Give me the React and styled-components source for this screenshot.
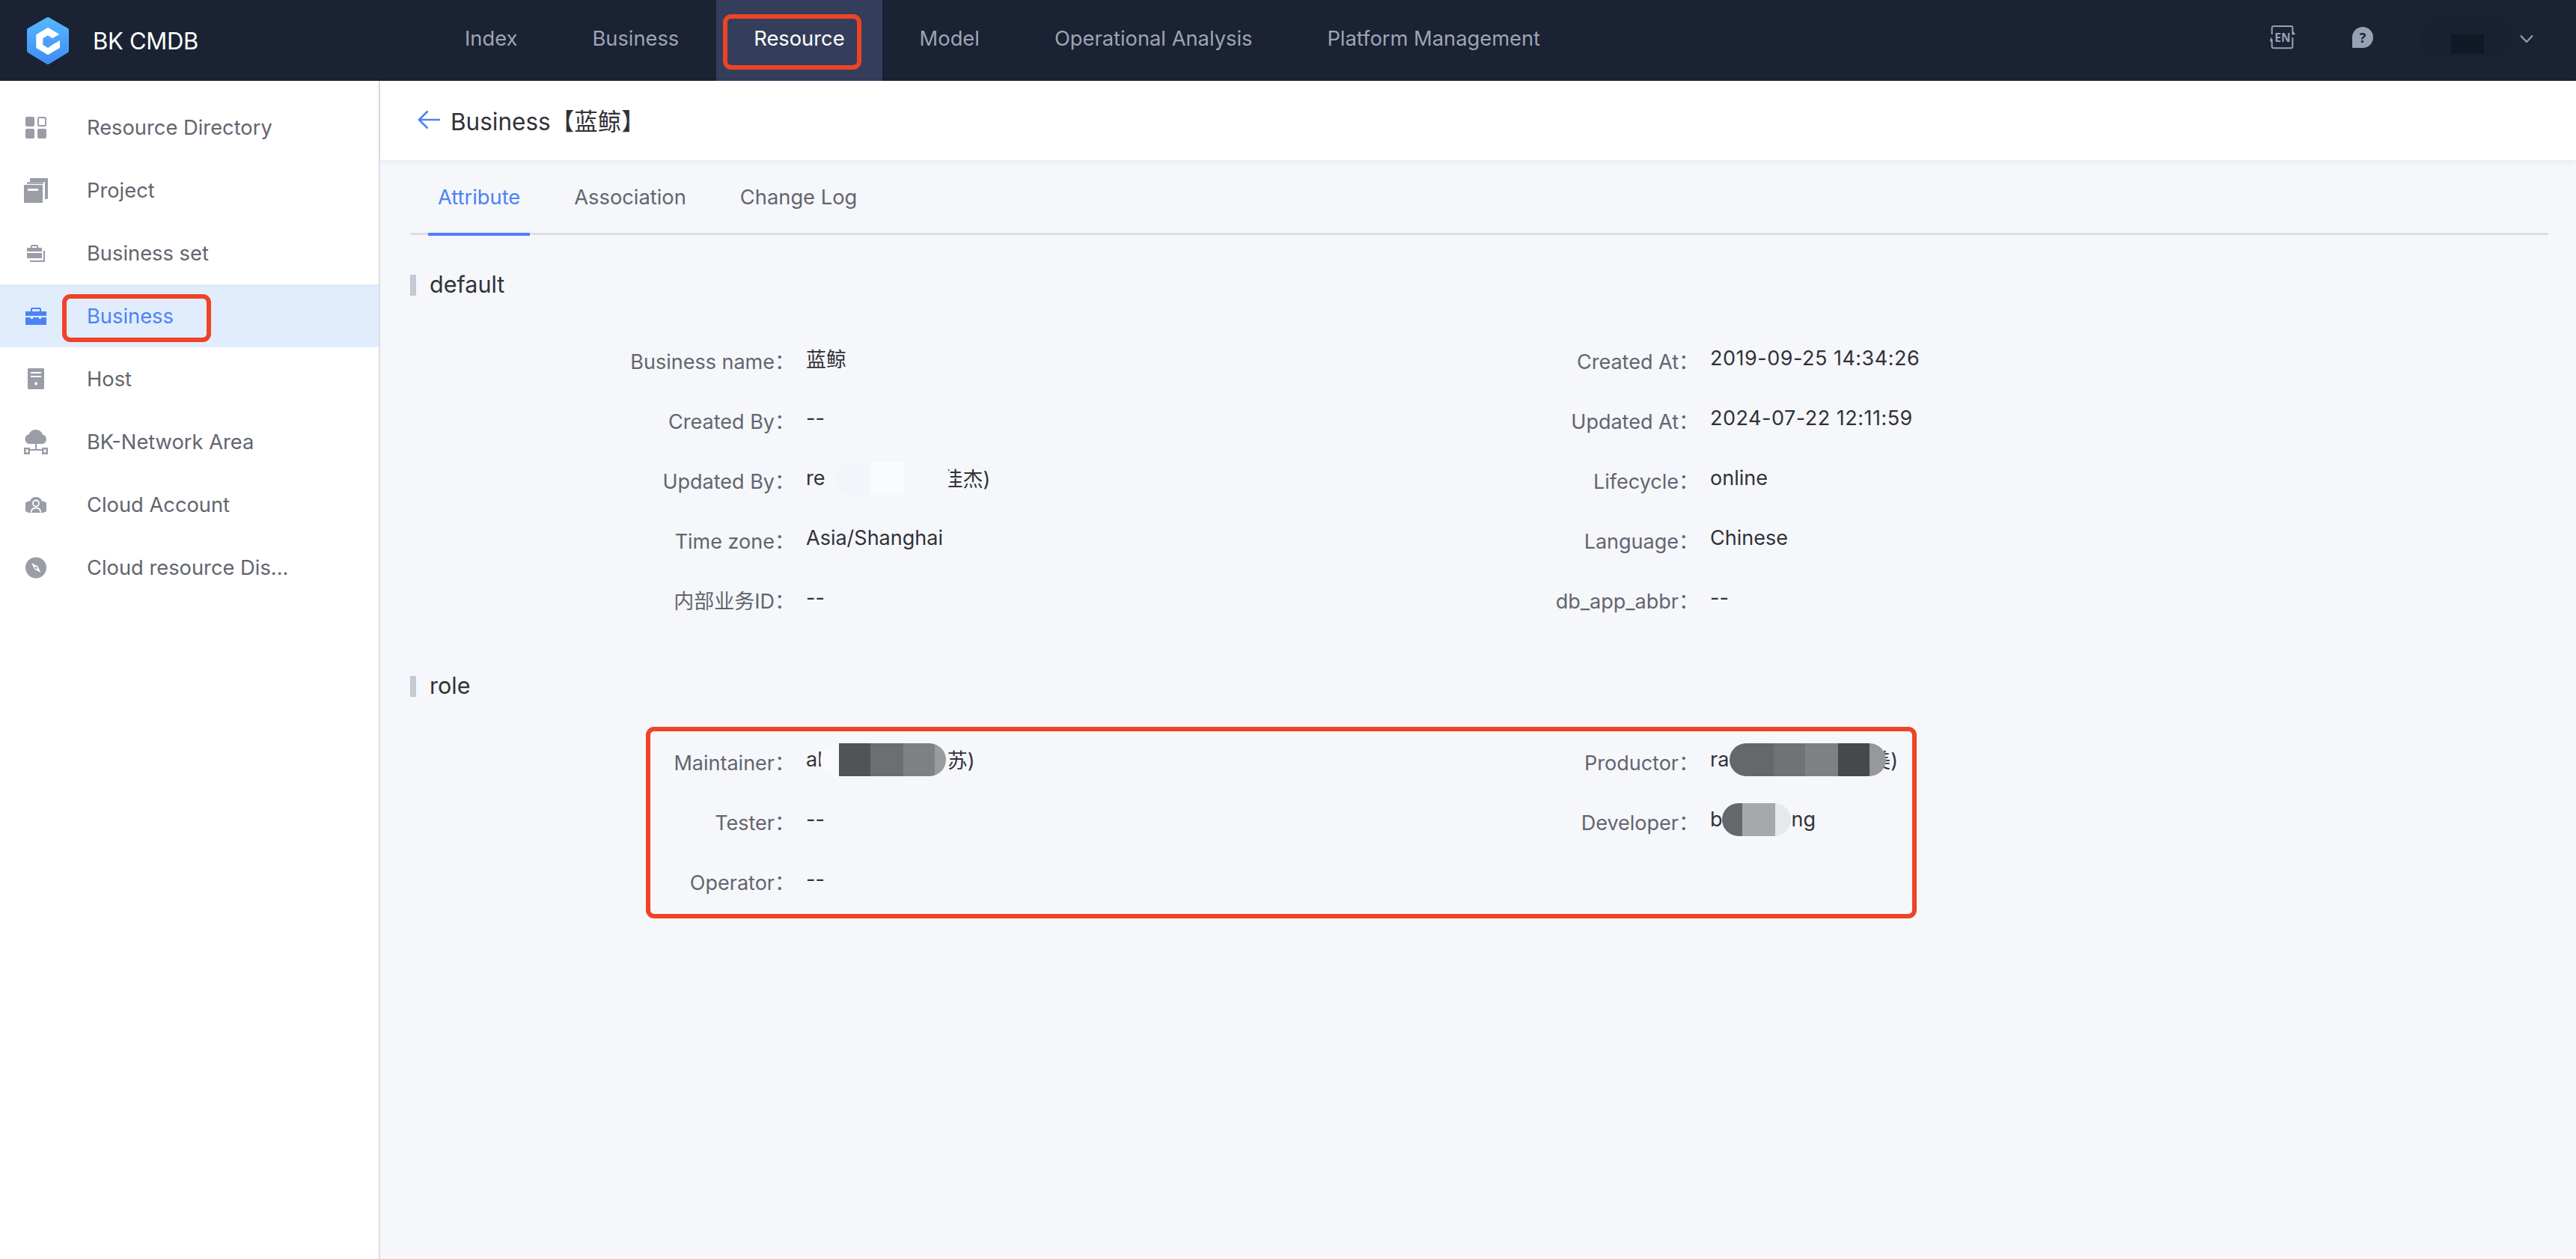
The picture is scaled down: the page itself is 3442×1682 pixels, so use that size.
import styled, { createGlobalStyle } from "styled-components";

const GlobalStyle = createGlobalStyle`
  * { box-sizing: border-box; }
  html, body { margin: 0; padding: 0; background: #f5f7fb; }
  body {
    font-family: Inter, "Noto Sans CJK SC", "Noto Sans", sans-serif;
    font-size: 27.3px;
    color: #313238;
  }
`;

const Page = styled.div`
  position: relative;
  width: 3442px;
  height: 1682px;
  overflow: hidden;
  display: flex;
  flex-direction: column;
`;

/* top bar */
const TopBar = styled.header`
  height: 108px;
  flex: none;
  display: flex;
  align-items: center;
  background: #1a2233;
`;
const Brand = styled.div`
  width: 571px;
  padding-left: 36px;
  display: flex;
  align-items: center;
  gap: 32px;
`;
const BrandName = styled.span`
  color: #fff;
  font-size: 31px;
  letter-spacing: -0.3px;
`;
const Nav = styled.nav`
  display: flex;
  height: 100%;
`;
const NavItem = styled.a`
  display: flex;
  align-items: center;
  padding: 0 50px 5px;
  color: ${(p) => (p.$active ? "#fff" : "#9ea4b3")};
  background: ${(p) => (p.$active ? "#343e5a" : "transparent")};
`;
const TopRight = styled.div`
  margin-left: auto;
  padding: 0 57px 8px 0;
  display: flex;
  align-items: center;
`;
const UserBlot = styled.div`
  width: 123px;
  height: 54px;
  margin: 0 9px 0 63px;
  border-radius: 26px;
  background: #182031;
  display: flex;
  justify-content: center;
`;
const UserBlotCore = styled.div`
  width: 44px;
  height: 26px;
  margin-top: 23px;
  background: #111826;
`;
const HelpGap = styled.div`
  width: 74px;
`;
const ChevronBox = styled.span`
  display: flex;
  margin-top: 3px;
`;

/* body */
const Body = styled.div`
  flex: 1;
  display: flex;
  min-height: 0;
`;
const Sidebar = styled.aside`
  width: 508px;
  flex: none;
  padding-top: 20px;
  background: #fff;
  border-right: 2px solid #dcdee5;
`;
const MenuItem = styled.a`
  height: 84px;
  display: flex;
  align-items: center;
  padding-left: 32px;
  gap: 52px;
  color: ${(p) => (p.$active ? "#4d82f5" : "#63656e")};
  background: ${(p) => (p.$active ? "#e1ecfd" : "transparent")};
`;
const MenuIcon = styled.span`
  width: 32px;
  height: 40px;
  flex: none;
  display: flex;
  align-items: center;
  justify-content: center;
  color: ${(p) => (p.$active ? "#4d82f5" : "#9a9ca6")};
`;
const MenuLabel = styled.span`
  white-space: nowrap;
`;

const Main = styled.main`
  flex: 1;
  min-width: 0;
  background: #f5f7fb;
`;
const Crumb = styled.div`
  height: 106px;
  padding: 0 0 2px 50px;
  display: flex;
  align-items: center;
  gap: 14px;
  background: #fff;
  box-shadow: 0 2px 8px rgba(30, 40, 70, 0.07);
  font-size: 31.5px;
`;
const Content = styled.div`
  padding: 0 37px 0 40px;
`;
const Tabs = styled.div`
  height: 100px;
  padding-left: 24px;
  display: flex;
  gap: 46px;
  border-bottom: 3px solid #dcdee5;
`;
const Tab = styled.a`
  height: 101px;
  padding: 2px 13px 0;
  display: flex;
  align-items: center;
  color: ${(p) => (p.$active ? "#4d82f5" : "#63656e")};
  border-bottom: 4px solid ${(p) => (p.$active ? "#4d82f5" : "transparent")};
`;
const SectionTitle = styled.h3`
  margin: ${(p) => p.$top}px 0 46px;
  height: 28px;
  padding: 0 0 3px 18px;
  display: flex;
  align-items: center;
  border-left: 8px solid #c4c9d2;
  font-size: 30.5px;
  font-weight: 400;
  color: #313238;
`;
const FieldGrid = styled.div`
  padding-left: 114px;
  display: grid;
  grid-template-columns: 1208px 1208px;
  grid-auto-rows: 80px;
`;
const Field = styled.div`
  display: flex;
  align-items: center;
`;
const Label = styled.span`
  width: 400px;
  flex: none;
  text-align: right;
  font-size: 27px;
  color: #63656e;
  white-space: nowrap;
`;
const Value = styled.div`
  height: 38px;
  margin: 0 0 5px 15px;
  display: flex;
  align-items: center;
  font-size: 27px;
  white-space: nowrap;
`;
const DateValue = styled(Value)`
  letter-spacing: 0.5px;
`;
const Blot = styled.span`
  position: relative;
  z-index: 1;
  flex: none;
  height: 44px;
  margin-left: ${(p) => p.$left || 0}px;
  margin-right: ${(p) => p.$right || 0}px;
  display: flex;
  overflow: hidden;
  border-radius: 22px;
`;
const BlotCell = styled.i`
  display: block;
  width: ${(p) => p.$w}px;
  background: ${(p) => p.$c};
`;

/* red annotation frames, they sit on top of the page */
const Mark = styled.div`
  position: absolute;
  left: ${(p) => p.$x}px;
  top: ${(p) => p.$y}px;
  width: ${(p) => p.$w}px;
  height: ${(p) => p.$h}px;
  border: 6px solid #ee4326;
  border-radius: 11px;
  pointer-events: none;
`;

const Logo = () => (
  <svg width="56" height="63" viewBox="0 0 56 63">
    <defs>
      <linearGradient id="logoFill" x1="0" y1="0" x2="0" y2="1" gradientUnits="objectBoundingBox">
        <stop offset="0" stopColor="#55b6ff" />
        <stop offset="1" stopColor="#3f8ef5" />
      </linearGradient>
    </defs>
    <path
      d="M28 2.500L53.500 17V45L28 60.500L2.500 45V17Z"
      fill="url(#logoFill)"
      stroke="url(#logoFill)"
      strokeWidth="5"
      strokeLinejoin="round"
    />
    <path
      d="M28 13.700L43.300 22.700L34 28.300L28 24.300L21.300 28.300V36.700L28 41L34 36.700L44 31V41L28 50.300L12.300 41V23.300Z"
      fill="#fff"
    />
  </svg>
);

const LangIcon = () => (
  <svg width="36" height="32" viewBox="0 0 36 32">
    <path
      d="M3.700 12V3a2 2 0 0 1 2-2H29.300a2 2 0 0 1 2 2V11.300H33.500M31.300 16V28.300a2 2 0 0 1-2 2H5.700a2 2 0 0 1-2-2V19.500H1.800"
      fill="none"
      stroke="#97a1b4"
      strokeWidth="2"
    />
    <path d="M31.500 7L35 11.500L31.500 12.500Z M3.500 24L0.800 19.500L3.500 15Z" fill="#97a1b4" />
    <text x="18" y="22" fontSize="15.500" fontWeight="700" textAnchor="middle" fill="#97a1b4" fontFamily="'Open Sans', sans-serif">EN</text>
  </svg>
);

const HelpIcon = () => (
  <svg width="30" height="30" viewBox="0 0 30 30">
    <path d="M15 1a14 14 0 1 1 0 28H2a1 1 0 0 1-1-1V15A14 14 0 0 1 15 1z" fill="#97a1b4" />
    <text x="15" y="21.500" fontSize="18" fontWeight="700" textAnchor="middle" fill="#1a2233" fontFamily="'Open Sans', sans-serif">?</text>
  </svg>
);

const Chevron = () => (
  <svg width="18" height="12" viewBox="0 0 18 12">
    <path d="M1 1.500L9 10L17 1.500" fill="none" stroke="#97a1b4" strokeWidth="2.200" />
  </svg>
);

const BackArrow = () => (
  <svg width="30" height="26" viewBox="0 0 30 26">
    <path d="M13.500 1.500L2 13L13.500 24.500M2 13H30" fill="none" stroke="#4d82f5" strokeWidth="2.600" />
  </svg>
);

const IconDirectory = () => (
  <svg width="28" height="29" viewBox="0 0 28 29" fill="currentColor">
    <rect x="0" y="0" width="12" height="13" rx="2" />
    <rect x="17" y="1" width="10" height="11" rx="1.500" fill="none" stroke="currentColor" strokeWidth="2" />
    <rect x="0" y="16" width="12" height="13" rx="2" />
    <rect x="16" y="16" width="12" height="13" rx="2" />
  </svg>
);

const IconProject = () => (
  <svg width="32" height="33" viewBox="0 0 32 33" fill="currentColor">
    <path d="M8 0H31a1 1 0 0 1 1 1V27a1 1 0 0 1-1 1H28V5H8z" />
    <path d="M4 5H26V8H4z" opacity="0.85" />
    <path fillRule="evenodd" d="M1 9H24a1 1 0 0 1 1 1V32a1 1 0 0 1-1 1H1a1 1 0 0 1-1-1V10a1 1 0 0 1 1-1zM5 14v3H19V14z" />
  </svg>
);

const IconBusinessSet = () => (
  <svg width="24" height="23" viewBox="0 0 24 23" fill="currentColor">
    <path fillRule="evenodd" d="M7 0H13a2 2 0 0 1 2 2V4H19a1 1 0 0 1 1 1V9H0V5A1 1 0 0 1 1 4H5V2A2 2 0 0 1 7 0zM7 2V4H13V2z" />
    <path d="M0 11H20V17a1 1 0 0 1-1 1H1a1 1 0 0 1-1-1z" />
    <path d="M22 8H24V22a1 1 0 0 1-1 1H4V21H22z" />
  </svg>
);

const IconBusiness = () => (
  <svg width="28" height="23" viewBox="0 0 28 23" fill="currentColor">
    <path fillRule="evenodd" d="M9 0H19a2 2 0 0 1 2 2V5H28V11H0V5H7V2A2 2 0 0 1 9 0zM9 2V5H19V2z" />
    <path d="M0 13H7V15H10V13H18V15H21V13H28V23H0z" />
  </svg>
);

const IconHost = () => (
  <svg width="22" height="28" viewBox="0 0 22 28">
    <rect width="22" height="28" rx="1" fill="currentColor" />
    <rect x="4" y="5" width="14" height="2" fill="#fff" />
    <rect x="4" y="10" width="14" height="2" fill="#fff" />
    <circle cx="11" cy="20.500" r="2" fill="#fff" />
  </svg>
);

const IconNetwork = () => (
  <svg width="32" height="33" viewBox="0 0 32 33" fill="currentColor">
    <path d="M16 0a9 9 0 0 1 8.600 6.500A6.500 6.500 0 0 1 25.500 19H6.500A6.500 6.500 0 0 1 6.800 6.300 9 9 0 0 1 16 0z" />
    <rect x="15" y="19" width="2" height="7" />
    <rect x="8" y="26" width="16" height="2" />
    <path fillRule="evenodd" d="M0 24H8V33H0zM2.500 26.500V30.500H5.500V26.500z" />
    <path fillRule="evenodd" d="M24 24H32V33H24zM26.500 26.500V30.500H29.500V26.500z" />
  </svg>
);

const IconCloudAccount = () => (
  <svg width="28" height="21" viewBox="0 0 28 21">
    <path d="M14 0a8.500 8.500 0 0 1 8 5.500A7.600 7.600 0 0 1 23 21H5A7.600 7.600 0 0 1 6 5.500 8.500 8.500 0 0 1 14 0z" fill="currentColor" />
    <circle cx="14" cy="8.500" r="4" fill="none" stroke="#fff" strokeWidth="1.800" />
    <path d="M7.500 20.500C8 16 10.500 14.500 14 14.500S20 16 20.500 20.500" fill="none" stroke="#fff" strokeWidth="1.800" />
  </svg>
);

const IconCompass = () => (
  <svg width="28" height="29" viewBox="0 0 28 29">
    <circle cx="14" cy="14.500" r="14" fill="currentColor" />
    <path d="M8 8L16.500 12.500 20.500 21 12 16.500z" fill="#fff" />
    <circle cx="14" cy="14.500" r="1.600" fill="currentColor" />
  </svg>
);

const menu = [
  { name: "Resource Directory", icon: <IconDirectory /> },
  { name: "Project", icon: <IconProject /> },
  { name: "Business set", icon: <IconBusinessSet /> },
  { name: "Business", icon: <IconBusiness />, active: true },
  { name: "Host", icon: <IconHost /> },
  { name: "BK-Network Area", icon: <IconNetwork /> },
  { name: "Cloud Account", icon: <IconCloudAccount /> },
  { name: "Cloud resource Dis...", icon: <IconCompass /> },
];

const navLinks = ["Index", "Business", "Resource", "Model", "Operational Analysis", "Platform Management"];

const Smear = ({ cells, left, right }) => (
  <Blot $left={left} $right={right}>
    {cells.map(([w, c]) => (
      <BlotCell key={c + w} $w={w} $c={c} />
    ))}
  </Blot>
);

const defaults = [
  ["Business name", <Value>蓝鲸</Value>],
  ["Created At", <DateValue>2019-09-25 14:34:26</DateValue>],
  ["Created By", <Value>--</Value>],
  ["Updated At", <DateValue>2024-07-22 12:11:59</DateValue>],
  [
    "Updated By",
    <Value>
      re
      <Smear left={14} right={-11} cells={[[47, "#f4f5fa"], [44, "#fafbfe"], [42, "#f5f6fa"], [21, "#f6f7fb"]]} />
      佳杰)
    </Value>,
  ],
  ["Lifecycle", <Value>online</Value>],
  ["Time zone", <Value>Asia/Shanghai</Value>],
  ["Language", <Value>Chinese</Value>],
  ["内部业务ID", <Value>--</Value>],
  ["db_app_abbr", <Value>--</Value>],
];

const roles = [
  [
    "Maintainer",
    <Value>
      al
      <Smear left={-3} right={2} cells={[[25, "#f9fafd"], [42, "#525357"], [44, "#6d6e72"], [42, "#7f8084"], [15, "#9a9b9f"]]} />
      苏)
    </Value>,
  ],
  [
    "Productor",
    <Value>
      ra
      <Smear left={1} right={-21} cells={[[59, "#66676b"], [42, "#717276"], [44, "#7f8084"], [42, "#47484c"], [22, "#97989c"]]} />
      美)
    </Value>,
  ],
  ["Tester", <Value>--</Value>],
  [
    "Developer",
    <Value>
      b
      <Smear left={-1} right={1} cells={[[27, "#66676b"], [44, "#a7a8ab"], [21, "#e7e8eb"]]} />
      ng
    </Value>,
  ],
  ["Operator", <Value>--</Value>],
];

const Fields = ({ rows }) => (
  <FieldGrid>
    {rows.map(([label, value]) => (
      <Field key={label}>
        <Label>{label}：</Label>
        {value}
      </Field>
    ))}
  </FieldGrid>
);

export default function App() {
  return (
    <Page>
      <GlobalStyle />
      <TopBar>
        <Brand>
          <Logo />
          <BrandName>BK CMDB</BrandName>
        </Brand>
        <Nav>
          {navLinks.map((name) => (
            <NavItem key={name} $active={name === "Resource"}>
              {name}
            </NavItem>
          ))}
        </Nav>
        <TopRight>
          <LangIcon />
          <HelpGap />
          <HelpIcon />
          <UserBlot>
            <UserBlotCore />
          </UserBlot>
          <ChevronBox>
            <Chevron />
          </ChevronBox>
        </TopRight>
      </TopBar>
      <Body>
        <Sidebar>
          {menu.map((item) => (
            <MenuItem key={item.name} $active={item.active}>
              <MenuIcon $active={item.active}>{item.icon}</MenuIcon>
              <MenuLabel>{item.name}</MenuLabel>
            </MenuItem>
          ))}
        </Sidebar>
        <Main>
          <Crumb>
            <BackArrow />
            <span>Business【蓝鲸】</span>
          </Crumb>
          <Content>
            <Tabs>
              <Tab $active>Attribute</Tab>
              <Tab>Association</Tab>
              <Tab>Change Log</Tab>
            </Tabs>
            <SectionTitle $top={53}>default</SectionTitle>
            <Fields rows={defaults} />
            <SectionTitle $top={62}>role</SectionTitle>
            <Fields rows={roles} />
          </Content>
        </Main>
      </Body>
      <Mark $x={966} $y={19} $w={185} $h={74} />
      <Mark $x={83} $y={393} $w={199} $h={64} />
      <Mark $x={863} $y={971} $w={1698} $h={256} />
    </Page>
  );
}
